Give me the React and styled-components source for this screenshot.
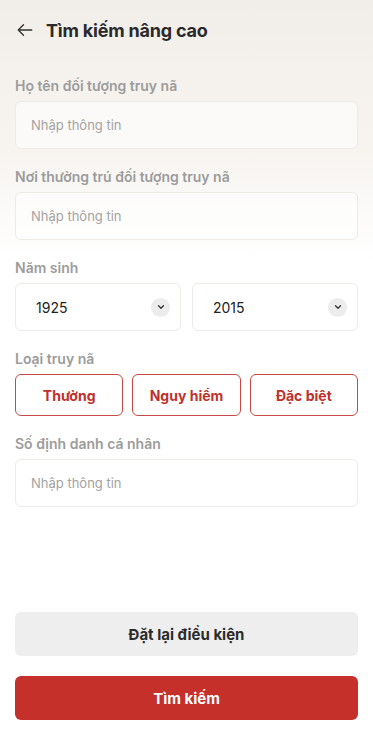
import React from 'react';
import styled, { createGlobalStyle } from 'styled-components';

const GlobalStyle = createGlobalStyle`
  * { box-sizing: border-box; }
  body {
    margin: 0;
    font-family: Inter, "Noto Sans", sans-serif;
    background: #ffffff;
  }
`

const Page = styled.div`
  width: 100%;
  min-height: 750px;
  display: flex;
  flex-direction: column;
  background: linear-gradient(180deg, #f3efea 0px, #f7f4f0 150px, #ffffff 260px);
`
const Header = styled.div`
  height: 60px;
  display: flex;
  align-items: center;
  gap: 12px;
  padding: 0 16px;
  background: linear-gradient(180deg, #f1ede8, #f4f1ec);
`
const BackButton = styled.button`
  border: none;
  background: none;
  padding: 0;
  display: flex;
  align-items: center;
  color: #333;
  cursor: pointer;
`
const Title = styled.h1`
  margin: 0;
  font-size: 18px;
  font-weight: 700;
  color: #2a2a2a;
  letter-spacing: -0.2px;
`
const Form = styled.div`
  flex: 1;
  display: flex;
  flex-direction: column;
  padding: 17px 15px 0;
`
const Field = styled.div`
  display: flex;
  flex-direction: column;
  gap: 6px;
  margin-bottom: 19px;
`
const Label = styled.label`
  font-size: 14px;
  font-weight: 600;
  color: #9c9c9c;
  line-height: 18px;
`
const Input = styled.input`
  height: 48px;
  width: 100%;
  border: 1px solid #eeebe7;
  border-radius: 6px;
  background: rgba(255, 255, 255, 0.55);
  padding: 0 15px;
  font-family: inherit;
  font-size: 13px;
  color: #333;
  outline: none;
  &::placeholder { color: #a3a3a3; }
`
const Row = styled.div`
  display: grid;
  grid-template-columns: repeat(${p => p.$cols}, 1fr);
  gap: ${p => p.$gap}px;
`
const Select = styled.div`
  height: 48px;
  border: 1px solid #eeebe7;
  border-radius: 6px;
  background: #fff;
  display: flex;
  align-items: center;
  justify-content: space-between;
  padding: 0 10px 0 20px;
  font-size: 14px;
  color: #222;
`
const Chevron = styled.span`
  width: 19px;
  height: 19px;
  border-radius: 50%;
  background: #ececec;
  display: flex;
  align-items: center;
  justify-content: center;
`
const TypeButton = styled.button`
  height: 42px;
  border: 1.5px solid #c94844;
  border-radius: 6px;
  background: #fff;
  color: #c0302c;
  font-family: inherit;
  font-size: 14px;
  font-weight: 700;
  cursor: pointer;
`
const Spacer = styled.div`
  flex: 1;
`
const Actions = styled.div`
  display: flex;
  flex-direction: column;
  gap: 20px;
  padding: 0 15px 30px;
`
const ActionButton = styled.button`
  height: 44px;
  border: none;
  border-radius: 6px;
  background: ${p => (p.$primary ? '#c5302b' : '#eeeeee')};
  color: ${p => (p.$primary ? '#ffffff' : '#2b2b2b')};
  font-family: inherit;
  font-size: 15px;
  font-weight: 700;
  cursor: pointer;
`

const ChevronDown = () => (
  <Chevron>
    <svg width="10" height="10" viewBox="0 0 24 24" fill="none" stroke="#333" strokeWidth="3" strokeLinecap="round" strokeLinejoin="round">
      <path d="M6 9l6 6 6-6" />
    </svg>
  </Chevron>
)

const App = () => {
  return (
    <Page>
      <GlobalStyle />
      <Header>
        <BackButton aria-label="Quay lại">
          <svg width="18" height="18" viewBox="0 0 24 24" fill="none" stroke="#333" strokeWidth="1.8" strokeLinecap="round" strokeLinejoin="round">
            <path d="M21 12H3M10 5l-7 7 7 7" />
          </svg>
        </BackButton>
        <Title>Tìm kiếm nâng cao</Title>
      </Header>
      <Form>
        <Field>
          <Label>Họ tên đối tượng truy nã</Label>
          <Input placeholder="Nhập thông tin" />
        </Field>
        <Field>
          <Label>Nơi thường trú đối tượng truy nã</Label>
          <Input placeholder="Nhập thông tin" />
        </Field>
        <Field>
          <Label>Năm sinh</Label>
          <Row $cols={2} $gap={11}>
            <Select>1925<ChevronDown /></Select>
            <Select>2015<ChevronDown /></Select>
          </Row>
        </Field>
        <Field>
          <Label>Loại truy nã</Label>
          <Row $cols={3} $gap={9}>
            <TypeButton>Thường</TypeButton>
            <TypeButton>Nguy hiểm</TypeButton>
            <TypeButton>Đặc biệt</TypeButton>
          </Row>
        </Field>
        <Field>
          <Label>Số định danh cá nhân</Label>
          <Input placeholder="Nhập thông tin" />
        </Field>
        <Spacer />
      </Form>
      <Actions>
        <ActionButton>Đặt lại điều kiện</ActionButton>
        <ActionButton $primary>Tìm kiếm</ActionButton>
      </Actions>
    </Page>
  )
}

export default App;
